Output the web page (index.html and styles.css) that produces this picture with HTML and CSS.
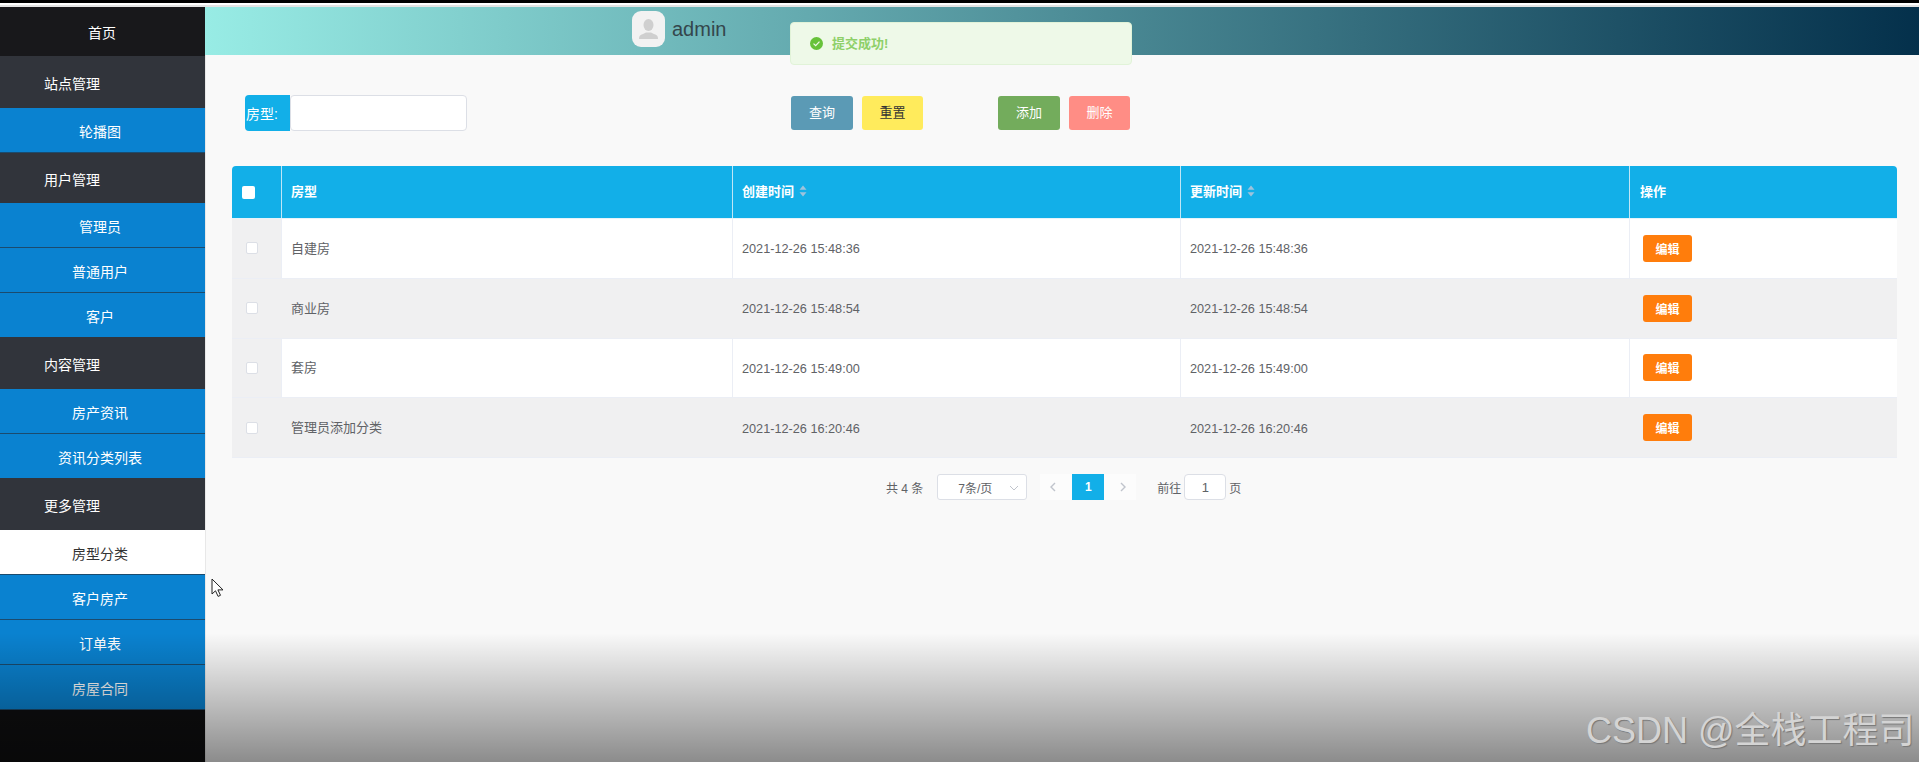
FILE: index.html
```html
<!DOCTYPE html>
<html lang="zh">
<head>
<meta charset="utf-8">
<title>房型分类</title>
<link rel="stylesheet" href="styles.css">
</head>
<body>
<div class="topstrip"></div>
<div class="app">
  <aside class="sidebar">
    <div class="home">首页</div>
    <div class="group g1">站点管理</div>
    <div class="item">轮播图</div>
    <div class="group g2">用户管理</div>
    <div class="item">管理员</div>
    <div class="item">普通用户</div>
    <div class="item i3">客户</div>
    <div class="group g3">内容管理</div>
    <div class="item">房产资讯</div>
    <div class="item i3">资讯分类列表</div>
    <div class="group g4">更多管理</div>
    <div class="item active">房型分类</div>
    <div class="item">客户房产</div>
    <div class="item">订单表</div>
    <div class="item">房屋合同</div>
  </aside>
  <main class="main">
    <header class="topbar">
      <div class="user">
        <div class="avatar">
          <svg viewBox="0 0 33 36" width="33" height="36"><ellipse cx="16.5" cy="14" rx="5" ry="6" fill="#cfcfcf"/><path d="M7 28c0-3 1-4 4-5l3-1.5h5l3 1.5c3 1 4 2 4 5z" fill="#cfcfcf"/></svg>
        </div>
        <span class="uname">admin</span>
      </div>
    </header>
    <section class="filters">
      <div class="field"><label class="flabel">房型:</label><input class="finput" type="text"></div>
      <div class="btns b1"><button class="btn query">查询</button><button class="btn reset">重置</button></div>
      <div class="btns b2"><button class="btn add">添加</button><button class="btn del">删除</button></div>
    </section>
    <section class="tablewrap">
      <div class="row head">
        <div class="c c0"><span class="hcheck"></span></div>
        <div class="c c1">房型</div>
        <div class="c c2">创建时间<svg class="sort" viewBox="0 0 8 12" width="8" height="12"><path d="M4 0.5 7.5 4.8H.5z" fill="#9fc3dc"/><path d="M4 11.5 .5 7.2h7z" fill="#9fc3dc"/></svg></div>
        <div class="c c3">更新时间<svg class="sort" viewBox="0 0 8 12" width="8" height="12"><path d="M4 0.5 7.5 4.8H.5z" fill="#9fc3dc"/><path d="M4 11.5 .5 7.2h7z" fill="#9fc3dc"/></svg></div>
        <div class="c c4">操作</div>
      </div>
      <div class="row body">
        <div class="c c0"><span class="check"></span></div><div class="c c1">自建房</div><div class="c c2">2021-12-26 15:48:36</div><div class="c c3">2021-12-26 15:48:36</div><div class="c c4"><button class="edit">编辑</button></div>
      </div>
      <div class="row body alt">
        <div class="c c0"><span class="check"></span></div><div class="c c1">商业房</div><div class="c c2">2021-12-26 15:48:54</div><div class="c c3">2021-12-26 15:48:54</div><div class="c c4"><button class="edit">编辑</button></div>
      </div>
      <div class="row body">
        <div class="c c0"><span class="check"></span></div><div class="c c1">套房</div><div class="c c2">2021-12-26 15:49:00</div><div class="c c3">2021-12-26 15:49:00</div><div class="c c4"><button class="edit">编辑</button></div>
      </div>
      <div class="row body alt">
        <div class="c c0"><span class="check"></span></div><div class="c c1">管理员添加分类</div><div class="c c2">2021-12-26 16:20:46</div><div class="c c3">2021-12-26 16:20:46</div><div class="c c4"><button class="edit">编辑</button></div>
      </div>
    </section>
    <nav class="pager">
      <span class="total">共 4 条</span>
      <div class="size">7条/页<svg class="chev" viewBox="0 0 10 6" width="10" height="6"><path d="M1 1l4 4 4-4" fill="none" stroke="#c0c4cc" stroke-width="1"/></svg></div>
      <div class="pbtn prev"><svg viewBox="0 0 6 10" width="6" height="10"><path d="M5 1 1 5l4 4" fill="none" stroke="#c0c4cc" stroke-width="1.4"/></svg></div>
      <div class="pnum">1</div>
      <div class="pbtn next"><svg viewBox="0 0 6 10" width="6" height="10"><path d="M1 1l4 4-4 4" fill="none" stroke="#c0c4cc" stroke-width="1.4"/></svg></div>
      <span class="goto">前往</span><div class="pinput">1</div><span class="pageunit">页</span>
    </nav>
  </main>
</div>
<div class="toast">
  <svg viewBox="0 0 14 14" width="13" height="13"><circle cx="7" cy="7" r="7" fill="#67c23a"/><path d="M3.8 7.2 6.1 9.4 10.2 5" fill="none" stroke="#f0f9eb" stroke-width="1.3"/></svg>
  <span class="toasttext">提交成功!</span>
</div>
<div class="shade"></div>
<svg class="cursor" viewBox="0 0 13 20" width="13" height="20"><path d="M1 1v15l3.5-3.2 2.6 5.6 2.4-1.1-2.6-5.4H12z" fill="#fff" stroke="#222" stroke-width="1"/></svg>
<div class="mark">CSDN @全栈工程司</div>
</body>
</html>
```
FILE: styles.css
```css
* { box-sizing: border-box; }
html, body { margin: 0; padding: 0; height: 762px; overflow: hidden; background: #000; }
body { font-family: "Liberation Sans", "Noto Sans CJK SC", sans-serif; font-size: 13px; position: relative; }
.topstrip { height: 7px; background: linear-gradient(#000 0 3px, #fff 3px 5px, #e4e4e4 5px 7px); }
.app { display: flex; height: 755px; }
.sidebar { width: 205px; flex: none; background: #0f0f10; color: #fff; font-size: 14px; }
.home { height: 49px; background: #18181b; display: flex; align-items: center; justify-content: center; padding-right: 1px; padding-top: 1px; }
.group { background: #31343b; display: flex; align-items: center; padding-left: 44px; padding-top: 2px; height: 52px; }
.g2 { height: 50px; }
.item { background: #0a82d0; height: 45px; display: flex; align-items: center; justify-content: center; padding-right: 5px; padding-top: 2px; border-bottom: 1px solid #1b4b6e; }
.i3 { height: 44px; border-bottom: 0; padding-top: 1px; }
.active { background: #fff; color: #333; }
.main { flex: 1; background: #f9f9f9; min-width: 0; box-shadow: inset 1px 0 #e8e8e8; }
.topbar { height: 48px; background: linear-gradient(90deg, #98ece5, #04304b); padding-left: 427px; }
.user { display: flex; align-items: center; height: 40px; gap: 7px; position: relative; top: 2px; }
.avatar { width: 33px; height: 36px; border-radius: 9px; background: #f2f2f2; display: flex; }
.uname { font-size: 20px; color: #34464c; }
.filters { height: 111px; display: flex; align-items: center; padding-top: 5px; }
.field { display: flex; margin-left: 40px; }
.flabel { width: 45px; height: 36px; background: #12afe8; color: #fff; border-radius: 4px 0 0 4px; font-size: 14px; display: flex; align-items: center; padding-left: 1px; }
.finput { width: 177px; height: 36px; border: 1px solid #dcdfe6; border-radius: 4px; background: #fff; }
.btns { display: flex; gap: 9px; }
.b1 { margin-left: 324px; }
.b2 { margin-left: 75px; }
.btn { height: 34px; border: 0; border-radius: 3px; font: inherit; color: #fff; padding: 0 0 3px; }
.query { width: 62px; background: #5b9ab5; }
.reset { width: 61px; background: #ffeb5c; color: #333; }
.add { width: 62px; background: #73ac5c; }
.del { width: 61px; background: #ff8d85; }
.tablewrap { margin-left: 27px; width: 1665px; }
.row { display: grid; grid-template-columns: 49px 451px 448px 449px 268px; }
.c { display: flex; align-items: center; padding-left: 9px; }
.head { height: 53px; background: #12afe8; color: #fff; font-weight: 700; font-size: 13px; border-radius: 4px 4px 0 0; border-bottom: 1px solid #e6f3fa; }
.head .c + .c { border-left: 1px solid #bfe6f6; padding-bottom: 3px; }
.head .c0 { padding-left: 10px; }
.body { height: 59.75px; font-size: 13px; color: #606266; background: #fff; border-bottom: 1px solid #ebeef5; }
.body .c + .c { border-left: 1px solid #ebeef5; }
.body .c0 { background: #f0f0f1; padding-left: 14px; }
.body .c1 { padding-bottom: 2px; }
.body .c2, .body .c3 { font-size: 12.7px; padding-top: 2px; }
.alt { background: #f0f0f1; }
.alt .c + .c { border-left-color: transparent; }
.hcheck { width: 13px; height: 13px; background: #fff; border-radius: 2px; }
.check { width: 12px; height: 12px; background: #fff; border: 1px solid #dcdfe6; border-radius: 2px; }
.sort { margin-left: 5px; }
.c4 { padding-left: 10px; }
.body .c4 { padding-left: 13px; }
.edit { width: 49px; height: 27px; background: #ff7d0c; border: 0; border-radius: 3px; color: #fff; font: inherit; font-size: 12px; font-weight: 700; padding: 0; }
.pager { display: flex; align-items: center; height: 26px; margin-top: 16px; margin-left: 681px; font-size: 12px; color: #606266; }
.size { width: 90px; height: 26px; margin-left: 14px; background: #fff; border: 1px solid #dcdfe6; border-radius: 3px; display: flex; align-items: center; justify-content: center; padding-right: 14px; position: relative; }
.chev { position: absolute; right: 7px; top: 10px; }
.pbtn { width: 32px; height: 26px; background: #fcfcfc; display: flex; align-items: center; justify-content: center; }
.prev { padding-right: 6px; }
.next { padding-left: 6px; }
.size + .pbtn { margin-left: 13px; }
.pnum { width: 32px; height: 26px; background: #12afe8; color: #fff; font-weight: 700; display: flex; align-items: center; justify-content: center; }
.goto { margin-left: 21px; }
.pinput { width: 42px; height: 26px; margin: 0 3px; background: #fff; border: 1px solid #dcdfe6; border-radius: 4px; display: flex; align-items: center; justify-content: center; font-size: 13px; }
.shade { position: absolute; left: 0; right: 0; bottom: 0; height: 129px; background: linear-gradient(rgba(0,0,0,0), rgba(0,0,0,.44)); }
.toast { position: absolute; left: 790px; top: 22px; width: 342px; height: 43px; background: #eef9e8; border: 1px solid #e1f3d8; border-radius: 4px; display: flex; align-items: center; gap: 9px; padding-left: 19px; color: #8ed06a; font-size: 13px; font-weight: 700; }
.toasttext { position: relative; top: -1px; }
.cursor { position: absolute; left: 211px; top: 578px; }
.mark { position: absolute; left: 1586px; top: 710px; font-size: 36px; line-height: 42px; color: #d4d4d4; white-space: nowrap; text-shadow: 1px 1px 1px #777; }
```
